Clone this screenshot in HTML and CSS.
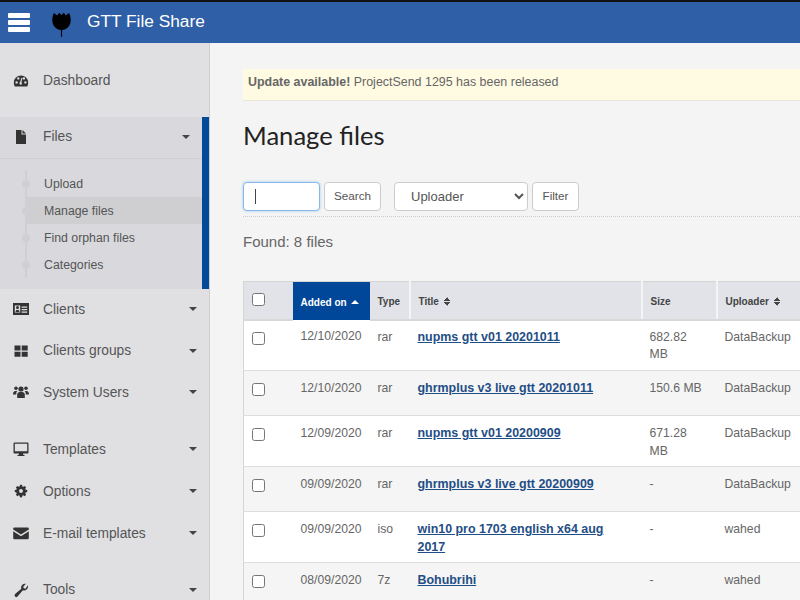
FILE: index.html
```html
<!DOCTYPE html>
<html lang="en">
<head>
  <meta charset="UTF-8">
  <title>Manage files</title>
  <link rel="stylesheet" href="styles.css">
</head>
<body>

  <header class="topbar">
    <button class="burger" aria-label="Menu"><span></span><span></span><span></span></button>
    <svg class="logo" viewBox="0 0 20 26" width="19" height="25">
      <path d="M2 1 L5.500 3.500 L7.500 .5 L10 3 L12.500 .5 L14.500 3.500 L18 1 C20 5 20.500 11 18 14.500 C16 17.500 13 18.500 10.600 18.800 L10.600 26 L9.400 26 L9.400 18.800 C7 18.500 4 17.500 2 14.500 C-.5 11 0 5 2 1 Z" fill="#000"/>
    </svg>
    <span class="brand">GTT File Share</span>
  </header>

  <div class="shell">
    <nav class="sidebar">
      <div class="nav-group">
        <a class="nav-item">
          <svg class="nav-icon" viewBox="0 0 16 16"><path fill-rule="evenodd" d="M8 2.500a7.200 7.200 0 0 0-7.200 7.200c0 1.400.4 2.600 1 3.800h12.400c.6-1.200 1-2.400 1-3.800A7.200 7.200 0 0 0 8 2.500zM3.600 10.600a1.200 1.200 0 1 1 0-2.400 1.200 1.200 0 0 1 0 2.400zM5.300 6.600a1.200 1.200 0 1 1 0-2.400 1.200 1.200 0 0 1 0 2.400zM8 11.800a1.500 1.500 0 0 1-.8-2.800l1.200-4.200 1 .2-1 4.300A1.500 1.500 0 0 1 8 11.800zM12.400 10.600a1.200 1.200 0 1 1 0-2.400 1.200 1.200 0 0 1 0 2.400zM10.900 6.600a1.200 1.200 0 1 1 0-2.400 1.200 1.200 0 0 1 0 2.400z"/></svg>
          <span class="nav-label">Dashboard</span>
        </a>
      </div>

      <div class="nav-group nav-open">
        <a class="nav-item nav-head">
          <svg class="nav-icon" viewBox="0 0 16 16"><path d="M3 1h5.500v4.500H13V15H3z M9.500 1 L13 4.500 H9.500z"/></svg>
          <span class="nav-label">Files</span>
          <i class="caret"></i>
        </a>
        <ul class="subnav">
          <li>Upload</li>
          <li class="active">Manage files</li>
          <li>Find orphan files</li>
          <li>Categories</li>
        </ul>
      </div>

      <div class="nav-group">
        <a class="nav-item">
          <svg class="nav-icon" viewBox="0 0 16 16"><path fill-rule="evenodd" d="M0 2h16v12H0zM1.800 4.500v7h5.400v-7zM8.600 5.500v1.300h5.600V5.500zM8.600 8v1.300h5.600V8zM8.600 10.400v1.300h5.600v-1.300z"/><circle cx="4.500" cy="6.500" r="1.500"/><path d="M2.500 11c0-3 4-3 4 0z"/></svg>
          <span class="nav-label">Clients</span>
          <i class="caret"></i>
        </a>
        <a class="nav-item">
          <svg class="nav-icon" viewBox="0 0 16 16"><path d="M1.500 2.500h6v5h-6zM8.700 2.500h6v5h-6zM1.500 8.700h6v5h-6zM8.700 8.700h6v5h-6z"/></svg>
          <span class="nav-label">Clients groups</span>
          <i class="caret"></i>
        </a>
        <a class="nav-item">
          <svg class="nav-icon" viewBox="0 0 16 16"><circle cx="8" cy="5" r="2.600"/><circle cx="3" cy="4.200" r="1.800"/><circle cx="13" cy="4.200" r="1.800"/><path d="M4.200 14V10.500C4.200 8.500 6 8 8 8s3.800.5 3.800 2.500V14zM0 10.500C0 7.500 1.500 7 3 7c.6 0 1 .1 1.400.3C3.500 8 3.200 9 3.200 10.500zM16 10.500C16 7.500 14.500 7 13 7c-.6 0-1 .1-1.400.3.900.7 1.200 1.700 1.200 3.200z"/></svg>
          <span class="nav-label">System Users</span>
          <i class="caret"></i>
        </a>
      </div>

      <div class="nav-group nav-settings">
        <a class="nav-item">
          <svg class="nav-icon" viewBox="0 0 16 16"><path fill-rule="evenodd" d="M1.500 1.500h13a1 1 0 0 1 1 1v9a1 1 0 0 1-1 1h-4.500l.4 1.500h1.100v1H4.500v-1h1.100l.4-1.500H1.500a1 1 0 0 1-1-1v-9a1 1 0 0 1 1-1zM1.800 2.800v7.400h12.400V2.800z"/></svg>
          <span class="nav-label">Templates</span>
          <i class="caret"></i>
        </a>
        <a class="nav-item">
          <svg class="nav-icon nav-icon-small" viewBox="0 0 16 16"><path fill-rule="evenodd" d="M6.800 1.500h2.400l.4 1.900 1.100.5 1.600-1 1.700 1.700-1 1.600.5 1.100 1.900.4v2.400l-1.900.4-.5 1.100 1 1.600-1.700 1.700-1.600-1-1.100.5-.4 1.900H6.800l-.4-1.900-1.100-.5-1.600 1-1.700-1.700 1-1.600-.5-1.100-1.900-.4V7.700l1.900-.4.5-1.100-1-1.600 1.700-1.700 1.600 1 1.100-.5zM8 6.500a2.300 2.300 0 1 0 0 4.600 2.300 2.300 0 0 0 0-4.600z" transform="translate(0 -.8)"/></svg>
          <span class="nav-label">Options</span>
          <i class="caret"></i>
        </a>
        <a class="nav-item">
          <svg class="nav-icon" viewBox="0 0 16 16"><path d="M1.500 2.500h13A1.300 1.300 0 0 1 15.800 4v.5L8 9.500.2 4.500V4a1.300 1.300 0 0 1 1.300-1.500zM.2 6.300 8 11.300l7.800-5V13a1.300 1.300 0 0 1-1.300 1.300h-13A1.300 1.300 0 0 1 .2 13z"/></svg>
          <span class="nav-label">E-mail templates</span>
          <i class="caret"></i>
        </a>
      </div>

      <div class="nav-group">
        <a class="nav-item">
          <svg class="nav-icon" viewBox="0 0 16 16"><path d="M14.800 3.300c.5 1.700 0 3.300-1.200 4.300-1.100.9-2.500 1-3.700.6L4.500 14.500a1.600 1.600 0 0 1-2.400 0 1.700 1.700 0 0 1 0-2.400l6.200-5.400c-.4-1.300-.2-2.700.8-3.800 1-1.100 2.500-1.500 3.900-1.100L10.300 4.500l.4 1.800 1.800.4z"/></svg>
          <span class="nav-label">Tools</span>
          <i class="caret"></i>
        </a>
      </div>
    </nav>

    <main class="content">
      <div class="alert"><strong>Update available!</strong> ProjectSend 1295 has been released</div>

      <h1 class="page-title">Manage files</h1>

      <form class="filters">
        <div class="search-wrap">
          <input class="field search-input" type="text">
          <span class="text-cursor"></span>
        </div>
        <button class="btn btn-search" type="button">Search</button>
        <select class="field uploader-select">
          <option>Uploader</option>
        </select>
        <button class="btn btn-filter" type="button">Filter</button>
      </form>

      <p class="found">Found: 8 files</p>

      <table class="files">
        <thead>
          <tr>
            <th class="col-check"><input type="checkbox"></th>
            <th class="col-date sorted">Added on <i class="sort-up"></i></th>
            <th class="col-type">Type</th>
            <th class="col-title">Title <i class="sort-both"></i></th>
            <th class="col-size">Size</th>
            <th class="col-uploader">Uploader <i class="sort-both"></i></th>
          </tr>
        </thead>
        <tbody>
          <tr class="r51">
            <td><input type="checkbox"></td>
            <td>12/10/2020</td><td>rar</td>
            <td class="cell-title"><a href="#">nupms gtt v01 20201011</a></td>
            <td class="cell-size">682.82 MB</td><td>DataBackup</td>
          </tr>
          <tr class="r45">
            <td><input type="checkbox"></td>
            <td>12/10/2020</td><td>rar</td>
            <td class="cell-title"><a href="#">ghrmplus v3 live gtt 20201011</a></td>
            <td class="cell-size">150.6 MB</td><td>DataBackup</td>
          </tr>
          <tr class="r51">
            <td><input type="checkbox"></td>
            <td>12/09/2020</td><td>rar</td>
            <td class="cell-title"><a href="#">nupms gtt v01 20200909</a></td>
            <td class="cell-size">671.28 MB</td><td>DataBackup</td>
          </tr>
          <tr class="r45">
            <td><input type="checkbox"></td>
            <td>09/09/2020</td><td>rar</td>
            <td class="cell-title"><a href="#">ghrmplus v3 live gtt 20200909</a></td>
            <td class="cell-size">-</td><td>DataBackup</td>
          </tr>
          <tr class="r51">
            <td><input type="checkbox"></td>
            <td>09/09/2020</td><td>iso</td>
            <td class="cell-title"><a href="#">win10 pro 1703 english x64 aug 2017</a></td>
            <td class="cell-size">-</td><td>wahed</td>
          </tr>
          <tr class="r45">
            <td><input type="checkbox"></td>
            <td>08/09/2020</td><td>7z</td>
            <td class="cell-title"><a href="#">Bohubrihi</a></td>
            <td class="cell-size">-</td><td>wahed</td>
          </tr>
        </tbody>
      </table>
    </main>
  </div>

</body>
</html>
```

FILE: styles.css
```css
* {
  box-sizing: border-box;
}

html, body {
  height: 100%;
}

body {
  margin: 0;
  overflow: hidden;
  background-color: #f4f4f4;
  color: #666;
  font-family: "Liberation Sans", Arial, sans-serif;
  font-size: 12px;
}

/* top bar */
.topbar {
  display: flex;
  align-items: center;
  height: 43px;
  border-top: 2px solid #111;
  background-color: #2f5fa6;
  padding-left: 8px;
}

.burger {
  display: flex;
  flex-direction: column;
  justify-content: space-between;
  width: 22px;
  height: 19px;
  padding: 0;
  border: none;
  background: none;
}

.burger span {
  display: block;
  height: 5px;
  background-color: #fff;
  border-radius: 1px;
}

.logo {
  margin-left: 22px;
  margin-top: 3px;
}

.brand {
  margin-left: 16px;
  margin-top: -3px;
  color: #fff;
  font-size: 17.300px;
}

.shell {
  display: flex;
  height: 557px;
}

/* sidebar */
.sidebar {
  flex: none;
  width: 210px;
  padding-top: 17px;
  background-color: #e0e0e3;
  border-right: 1px solid #cfcfcf;
}

.nav-group {
  margin-bottom: 15px;
}

.nav-item {
  display: flex;
  align-items: center;
  height: 41.500px;
  padding-left: 13px;
  padding-right: 12px;
  color: #555;
  font-size: 13.800px;
}

.nav-settings .nav-item {
  height: 42px;
}

.nav-icon {
  flex: none;
  width: 16px;
  height: 16px;
  fill: #333;
}

.nav-icon-small {
  transform: scale(0.85);
}

.nav-label {
  flex: 1;
  margin-left: 14px;
}

.caret {
  width: 0;
  height: 0;
  border-left: 4px solid transparent;
  border-right: 4px solid transparent;
  border-top: 4px solid #444;
}

.nav-open {
  margin-bottom: 0;
  background-color: #d9d9dd;
  border-right: 7px solid #004a99;
}

.nav-open .nav-head {
  height: 42px;
  padding-bottom: 1px;
  border-bottom: 1px solid #d0d0d3;
}

.subnav {
  position: relative;
  list-style: none;
  margin: 0;
  padding: 11px 0 11px 26px;
}

.subnav::before {
  content: "";
  position: absolute;
  left: 25px;
  top: 11px;
  bottom: 11px;
  width: 2px;
  background-color: #d0d0d4;
}

.subnav li {
  position: relative;
  height: 27px;
  padding-left: 18px;
  padding-top: 1px;
  line-height: 27px;
  color: #555;
  font-size: 12.300px;
}

.subnav li::before {
  content: "";
  position: absolute;
  left: -4px;
  top: 10px;
  width: 8px;
  height: 8px;
  border-radius: 50%;
  background-color: #d0d0d4;
}

.subnav .active {
  background-color: #cfcfd2;
}

/* main column */
.content {
  flex: 1;
  min-width: 0;
  padding: 26px 0 0 33px;
}

.alert {
  height: 32px;
  padding-left: 5px;
  line-height: 26px;
  background-color: #fffbe3;
  border-bottom: 1px solid #e8e6d8;
  color: #666;
  font-size: 12.450px;
}

.page-title {
  margin: 19px 0 0;
  color: #222;
  font-family: Lato, sans-serif;
  font-size: 25.600px;
  font-weight: 400;
  line-height: 30px;
}

.filters {
  display: flex;
  align-items: center;
  height: 35px;
  margin-top: 32px;
  padding-bottom: 5px;
  border-bottom: 1px dotted #ccc;
}

.search-wrap {
  position: relative;
  margin-right: 4px;
}

.field {
  display: block;
  height: 29px;
  background-color: #fff;
  border: 1px solid #ccc;
  border-radius: 4px;
  color: #555;
  font-family: "Liberation Sans", Arial, sans-serif;
  font-size: 13px;
}

.search-input {
  width: 77px;
  border-color: #86b7e8;
  box-shadow: 0 0 3px rgba(102, 175, 233, 0.6);
  outline: none;
}

.text-cursor {
  position: absolute;
  left: 12px;
  top: 7px;
  width: 1px;
  height: 15px;
  background-color: #444;
}

.btn {
  height: 29px;
  padding: 0 0 2px;
  background-color: #fff;
  border: 1px solid #ccc;
  border-radius: 4px;
  color: #555;
  font-family: "Liberation Sans", Arial, sans-serif;
  font-size: 11.700px;
}

.btn-search {
  width: 57px;
}

.btn-filter {
  width: 47px;
}

.uploader-select {
  width: 134px;
  margin-left: 13px;
  margin-right: 4px;
  padding-left: 12px;
}

.found {
  margin: 17px 0 0;
  color: #666;
  font-size: 15px;
  line-height: 16px;
}

/* table */
.files {
  width: 640px;
  margin-top: 31px;
  border-collapse: collapse;
  table-layout: fixed;
  border-left: 1px solid #d5d5d5;
  border-top: 1px solid #d5d5d5;
}

.files th {
  height: 38px;
  padding: 3px 7px 0 8px;
  background-color: #e1e3e8;
  border-left: 2px solid #f4f4f4;
  border-bottom: 2px solid #d8d8d8;
  color: #444;
  font-size: 10px;
  text-align: left;
}

.files .col-check {
  width: 49px;
  padding: 0 7px;
  border-left: none;
}

.files .col-date {
  width: 77px;
}

.files .col-type {
  width: 40px;
  border-left: none;
}

.files .col-title {
  width: 232px;
}

.files .col-size {
  width: 75px;
}

.files .col-uploader {
  width: 167px;
}

.files .sorted {
  background-color: #00479a;
  color: #fff;
  border: none;
}

.files input[type="checkbox"] {
  width: 13px;
  height: 13px;
  margin: 0 0 0 1px;
}

.files td {
  padding: 9px 7px 0 8px;
  vertical-align: top;
  border-bottom: 1px solid #ddd;
  line-height: 17.500px;
  color: #666;
  font-size: 12.200px;
}

.files td:first-child {
  padding: 12px 7px 0;
}

.files tbody tr:first-child td {
  padding-top: 8px;
}

.files tbody tr:first-child td:first-child {
  padding-top: 11px;
}

.files .cell-title {
  padding-right: 12px;
}

.files .cell-size {
  padding-right: 12px;
}

.files tbody tr:nth-child(odd) {
  background-color: #fff;
}

.files tbody tr:nth-child(even) {
  background-color: #f5f5f5;
}

.r51 {
  height: 51px;
}

.r45 {
  height: 45px;
}

.files a {
  color: #1f4e86;
  font-size: 12.450px;
  font-weight: bold;
}

/* sort arrows */
.sort-up {
  display: inline-block;
  width: 0;
  height: 0;
  margin: 0 0 2px 2px;
  border-left: 4px solid transparent;
  border-right: 4px solid transparent;
  border-bottom: 4px solid #fff;
}

.sort-both {
  display: inline-block;
  width: 7px;
  height: 9px;
  margin-left: 2px;
  vertical-align: -1px;
  background:
    linear-gradient(to top left, #444 50%, transparent 50%) 0 0 / 50% 4px no-repeat,
    linear-gradient(to top right, #444 50%, transparent 50%) 100% 0 / 50% 4px no-repeat,
    linear-gradient(to bottom left, #444 50%, transparent 50%) 0 100% / 50% 4px no-repeat,
    linear-gradient(to bottom right, #444 50%, transparent 50%) 100% 100% / 50% 4px no-repeat;
}
```
